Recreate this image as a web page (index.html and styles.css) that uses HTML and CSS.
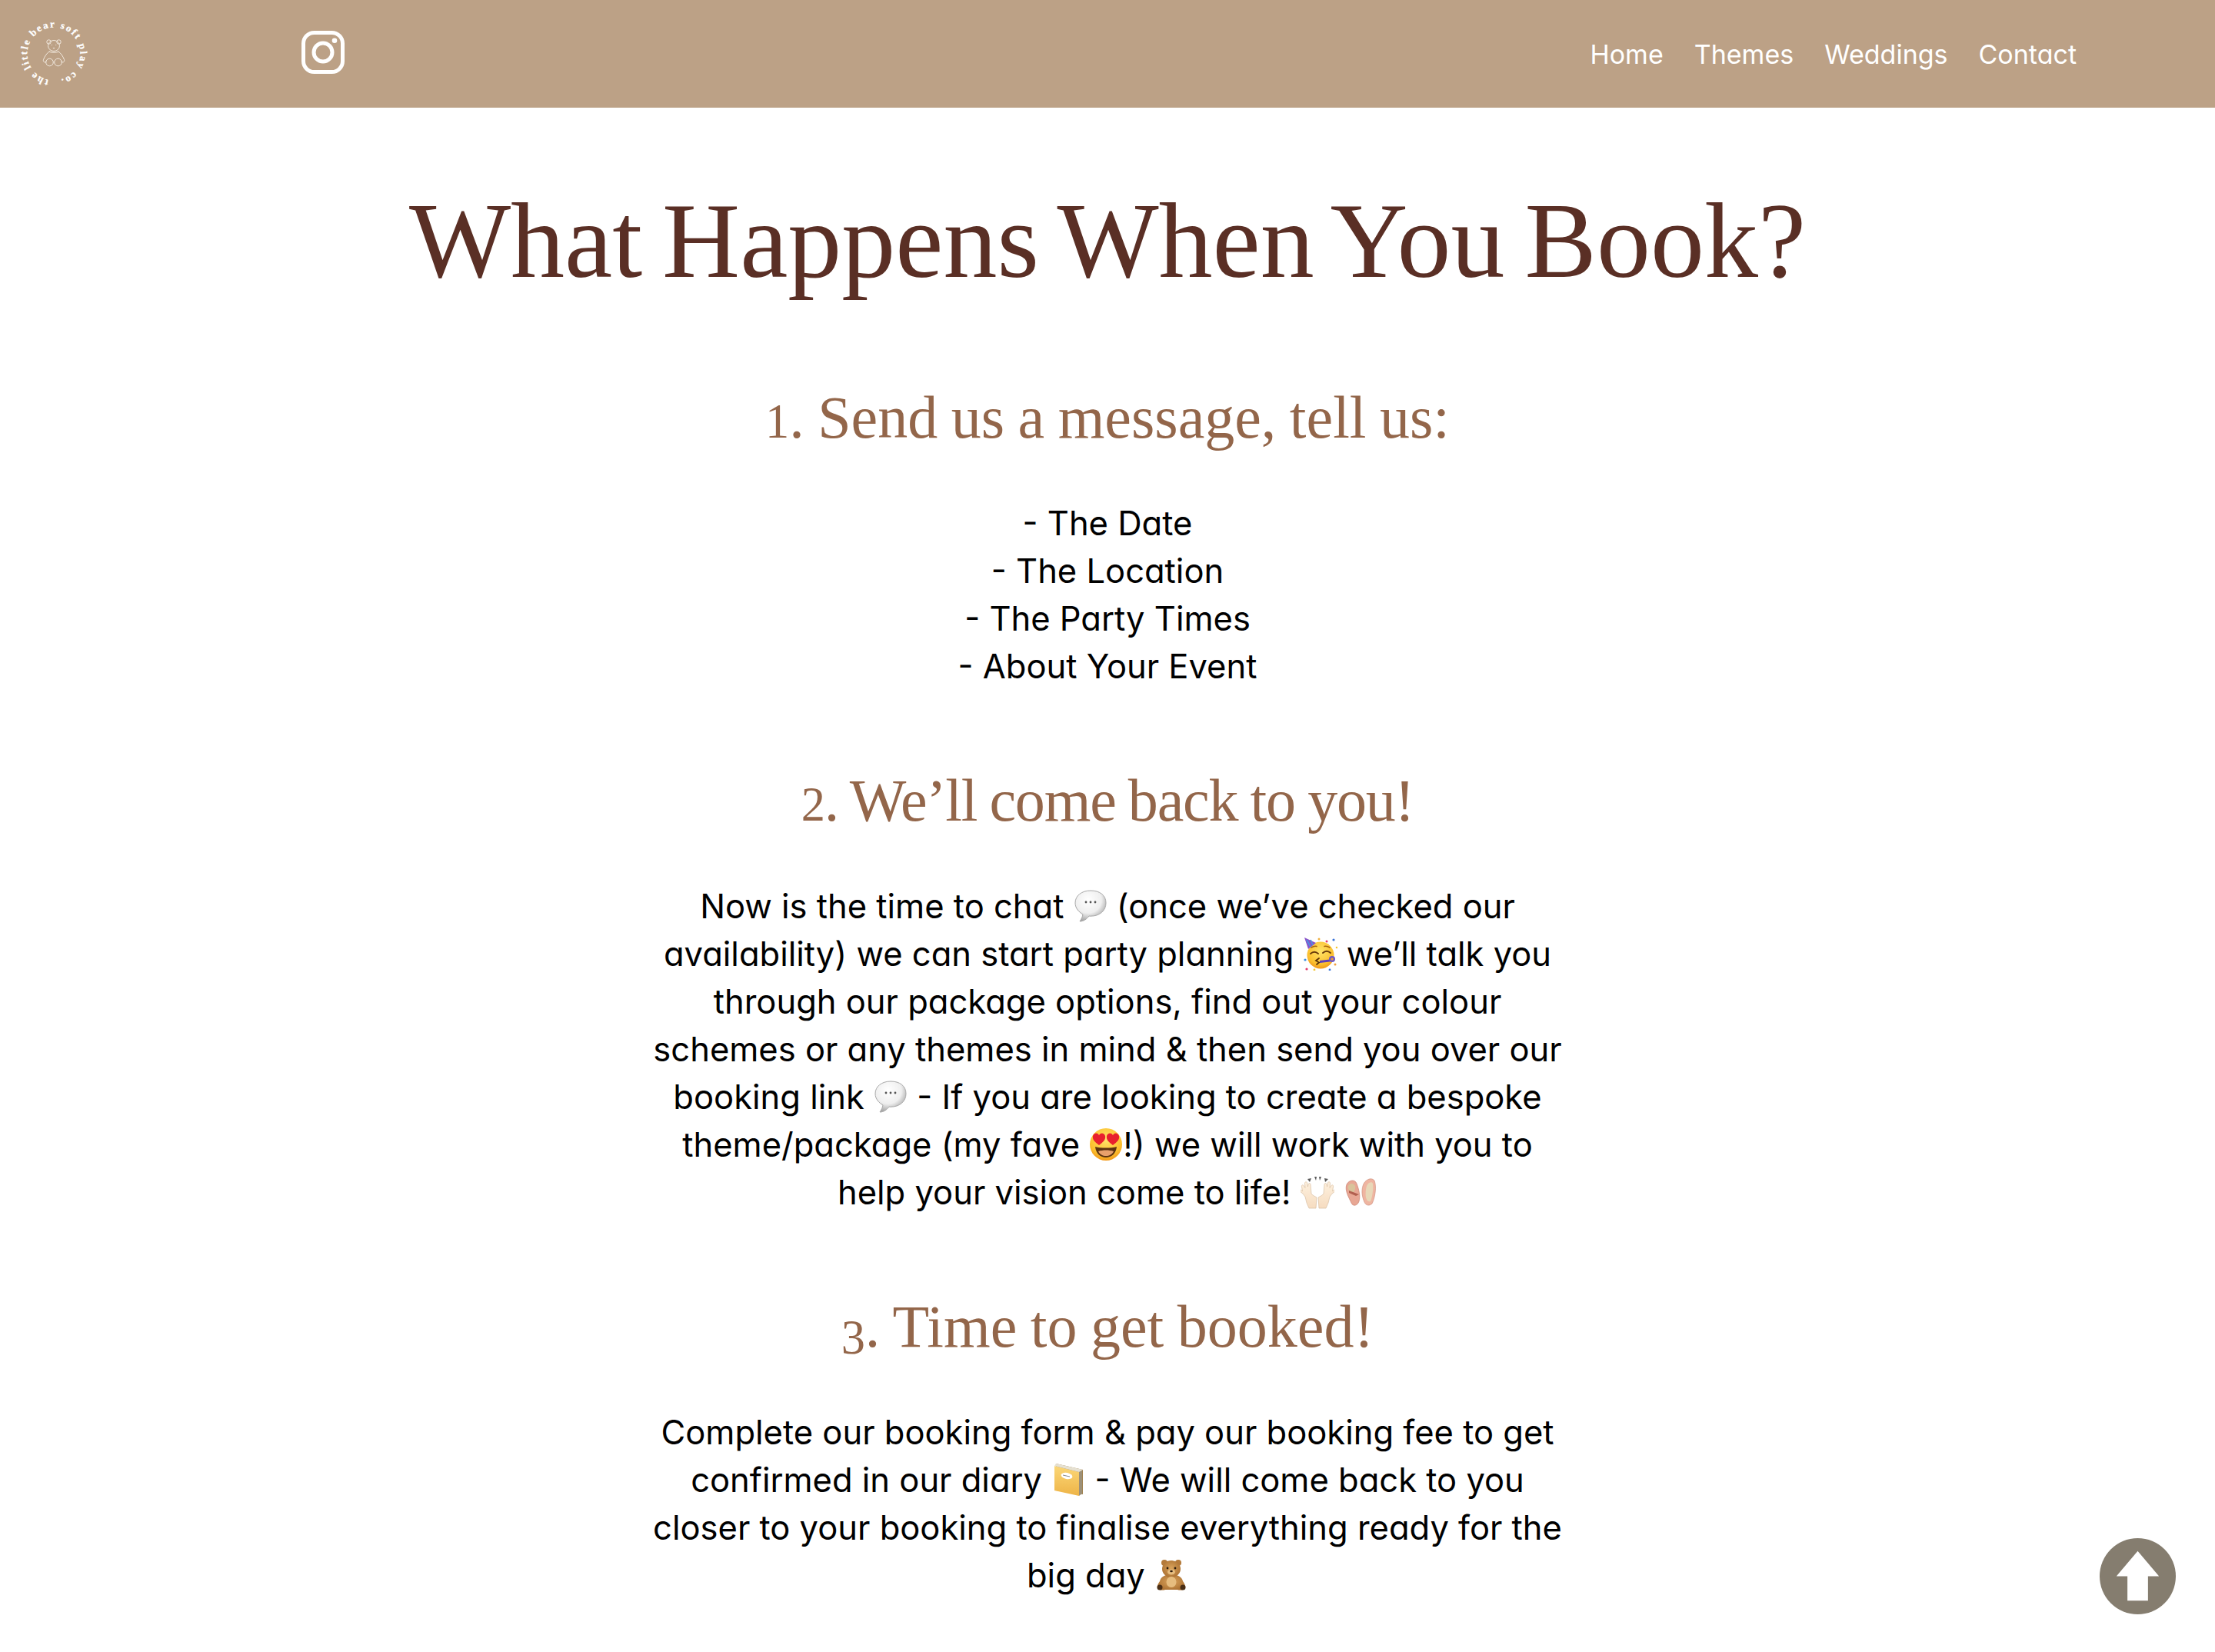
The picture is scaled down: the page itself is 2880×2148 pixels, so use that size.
FILE: index.html
```html
<!DOCTYPE html>
<html lang="en">
<head>
<meta charset="utf-8">
<title>What Happens When You Book?</title>
<link rel="stylesheet" href="styles.css">
</head>
<body>
<svg class="defs" width="0" height="0" aria-hidden="true">
  <defs>
    <radialGradient id="gBubble" cx="42%" cy="30%" r="72%"><stop offset="0" stop-color="#fff"/><stop offset=".6" stop-color="#efefef"/><stop offset="1" stop-color="#9d9d9d"/></radialGradient>
    <radialGradient id="gFace" cx="50%" cy="35%" r="70%"><stop offset="0" stop-color="#ffe46a"/><stop offset=".7" stop-color="#fbbf2d"/><stop offset="1" stop-color="#ee8a12"/></radialGradient>
    <linearGradient id="gBook" x1="0" y1="0" x2="0" y2="1"><stop offset="0" stop-color="#fbd777"/><stop offset="1" stop-color="#eeb447"/></linearGradient>
    <radialGradient id="gBear" cx="50%" cy="45%" r="65%"><stop offset="0" stop-color="#d9a35c"/><stop offset="1" stop-color="#a56a2c"/></radialGradient>
    <linearGradient id="gHand" x1="0" y1="0" x2="0" y2="1"><stop offset="0" stop-color="#fdf0de"/><stop offset="1" stop-color="#f6dcc0"/></linearGradient>
    <symbol id="e-bubble" viewBox="0 0 44 44">
      <path d="M22 2C10 2 2 9 2 18c0 7 5 12 10 15-.5 3-2 6-4 9 5 0 9-3 12-7 1 .2 1.300.2 2 .2 12 0 20-7.200 20-17.200S34 2 22 2z" fill="url(#gBubble)" stroke="#a8a8a8" stroke-width="1"/>
      <circle cx="16" cy="17" r="1.400" fill="#555"/><circle cx="22" cy="17" r="1.400" fill="#555"/><circle cx="28" cy="17" r="1.400" fill="#555"/>
    </symbol>
    <symbol id="e-party" viewBox="0 0 44 44">
      <circle cx="22" cy="24" r="17.500" fill="url(#gFace)"/>
      <path d="M1 1 16 8 6 16z" fill="#8a52c8"/><path d="M4 4l5 9M9 4l3 7" stroke="#4d8fe0" stroke-width="1.800"/>
      <g>
        <circle cx="20" cy="3" r="1.500" fill="#f0b040"/><circle cx="30" cy="6" r="1.500" fill="#e23b6d"/><circle cx="39" cy="4" r="1.600" fill="#3a74d8"/>
        <circle cx="43" cy="14" r="1.300" fill="#f4c430"/><circle cx="2" cy="30" r="1.600" fill="#3a8ee0"/><circle cx="4" cy="42" r="1.600" fill="#e23b6d"/>
        <circle cx="14" cy="43" r="1.400" fill="#f4c430"/><circle cx="34" cy="43" r="1.400" fill="#3a74d8"/><circle cx="41" cy="36" r="1.500" fill="#f0a040"/>
      </g>
      <path d="M9 22q5-4.500 10 0M25 21q5-4.500 10 0" fill="none" stroke="#6a3c0c" stroke-width="1.900" stroke-linecap="round"/>
      <path d="M10 14q4-2.500 7-1.500M27 12.500q3-1 7 1.500" fill="none" stroke="#a8640e" stroke-width="1.500" stroke-linecap="round"/>
      <path d="M20 28l-4 3 4 2.500-3 2.500" fill="none" stroke="#5a3208" stroke-width="1.800" stroke-linecap="round"/>
      <path d="M21 31l13-1.500v3L21 34z" fill="#5d3fb8"/><circle cx="37" cy="29" r="4" fill="#6b56c8"/><circle cx="37" cy="29" r="1.800" fill="#e59a3c"/>
    </symbol>
    <symbol id="e-hearts" viewBox="0 0 44 44">
      <circle cx="22" cy="22" r="21" fill="url(#gFace)"/>
      <path d="M8 25c7 2 21 2 28 0-1 9-7 14-14 14S9 34 8 25z" fill="#5c3310"/>
      <path d="M12 31c6-2 14-2 20 0-2 4-6 6-10 6s-8-2-10-6z" fill="#e8a06b"/>
      <path d="M13 23C8 19 4 16 5 11c1-4 6-5 8-1 2-4 7-3 8 1 1 5-3 8-8 12z" fill="#e8202e"/>
      <path d="M31 23c-5-4-9-7-8-12 1-4 6-5 8-1 2-4 7-3 8 1 1 5-3 8-8 12z" fill="#e8202e"/>
    </symbol>
    <symbol id="e-hands" viewBox="0 0 44 44">
      <g fill="#5a5a5a">
        <path d="M9 5l5-1-2 5zM18 2l3 0-1 5zM24 2l3 0-2 5zM31 4l5 1-4 4z"/>
      </g>
      <g fill="url(#gHand)" stroke="#d8bfa2" stroke-width=".7">
        <path d="M2 24l3 4 2 8 3 7h9l1-14c-3-2-6-3-7-5l-1-12c-.2-2-2.500-2-3 0l-.5 3-1-5c-.4-2-3-1.500-3 .5l.5 6-2-3c-1-1.500-3-.5-2.500 1.500l1 6-2-2c-1.200-1-2.500 0-2 1.500z" transform="translate(1 0)"/>
        <path d="M42 24l-3 4-2 8-3 7h-9l-1-14c3-2 6-3 7-5l1-12c.2-2 2.500-2 3 0l.5 3 1-5c.4-2 3-1.500 3 .5l-.5 6 2-3c1-1.500 3-.5 2.500 1.500l-1 6 2-2c1.200-1 2.500 0 2 1.500z" transform="translate(-1 0)"/>
      </g>
    </symbol>
    <symbol id="e-shoes" viewBox="0 0 44 44">
      <path d="M4 12c3-6 11-7 13-1 3 8 5 16 3 23-2 6-8 7-10 2C7 29 1 20 4 12z" fill="#e8a794" stroke="#c8806e" stroke-width=".7"/>
      <path d="M6 14c2-4 7-4 9 0 1 5-2 10-5 8-3-1-5-5-4-8z" fill="#d9c39b"/>
      <path d="M7 20l13 5-4 2-9-4z" fill="#b2604f"/>
      <path d="M25 14c2-8 11-12 15-7 3 8 1 22-3 30-3 3-8 3-10-2-3-7-4-14-2-21z" fill="#efb5a1" stroke="#cf9180" stroke-width=".7"/>
      <path d="M30 14c2-5 7-6 8-3 1 8-1 18-3 23-3 1-5-1-6-5-1-5 0-11 1-15z" fill="#e8d8b8"/>
    </symbol>
    <symbol id="e-book" viewBox="0 0 44 44">
      <path d="M6 1l35 8v32L6 36z" fill="#a08352"/>
      <path d="M4 4l32 8v31L4 36z" fill="url(#gBook)"/>
      <path d="M36 12l4-3v31l-4 3z" fill="#9c9078"/>
      <path d="M6 1l35 8-5 3L4 4z" fill="#e6e1d2"/>
      <ellipse cx="20" cy="17" rx="7.500" ry="4" transform="rotate(12 20 17)" fill="#fff"/>
      <path d="M15 16l9 2" stroke="#888" stroke-width="1"/>
    </symbol>
    <symbol id="e-bear" viewBox="0 0 44 44">
      <path d="M7 30c1-6 8-9 15-9s14 3 15 9c2 3 4 6 3 9-2 3-7 3-10 2H14c-3 1-8 1-10-2-1-3 1-6 3-9z" fill="url(#gBear)"/>
      <circle cx="13" cy="6" r="4" fill="#b47a3a"/><circle cx="31" cy="6" r="4" fill="#b47a3a"/>
      <ellipse cx="22" cy="14" rx="12" ry="11" fill="url(#gBear)"/>
      <ellipse cx="22" cy="31" rx="6.500" ry="7" fill="#e6bd7f"/>
      <ellipse cx="22" cy="18" rx="5" ry="3.500" fill="#e6bd7f"/>
      <circle cx="17" cy="13" r="1.400" fill="#2a1a0c"/><circle cx="27" cy="13" r="1.400" fill="#2a1a0c"/>
      <ellipse cx="22" cy="17" rx="1.800" ry="1.200" fill="#2a1a0c"/>
      <circle cx="7" cy="38" r="3.500" fill="#4a2f16"/><circle cx="37" cy="38" r="3.500" fill="#4a2f16"/>
    </symbol>
  </defs>
</svg>

<header class="topbar">
  <div class="brand">
    <a class="logo" href="#" aria-label="The little bear soft play co.">
      <svg class="logo-svg" viewBox="0 0 100 100">
        <defs><path id="ring" d="M43.400 83.900A34.500 34.500 0 1 1 57.800 83.600"/></defs>
        <text class="logo-text"><textPath href="#ring" textLength="200" lengthAdjust="spacing">the little bear soft play co.</textPath></text>
        <g class="logo-bear">
          <circle cx="43.500" cy="34.500" r="2.700"/><circle cx="56.500" cy="34.500" r="2.700"/>
          <ellipse cx="50" cy="39.500" rx="7.500" ry="7"/>
          <path d="M45 46.500c-4 2-7 7-8.500 11-1 3 2 4.500 4 2.500M55 46.500c4 2 7 7 8.500 11 1 3-2 4.500-4 2.500"/>
          <path d="M44.500 47.500c3 1 8 1 11 0"/>
          <circle cx="44.500" cy="61" r="4.800"/><circle cx="55.500" cy="61" r="4.800"/>
          <circle class="logo-eye" cx="47.300" cy="38.500" r=".6"/><circle class="logo-eye" cx="52.700" cy="38.500" r=".6"/>
          <path class="logo-eye" d="M48.500 42h3l-1.500 1.500z"/>
        </g>
      </svg>
    </a>
    <a class="insta" href="#" aria-label="Instagram">
      <svg viewBox="0 0 56 56" class="insta-svg">
        <rect x="2.500" y="2.500" width="51" height="51" rx="14"/>
        <circle cx="28" cy="28" r="12"/>
        <circle class="insta-dot" cx="43" cy="12.700" r="3.300"/>
      </svg>
    </a>
  </div>
  <nav class="nav">
    <a href="#">Home</a>
    <a href="#">Themes</a>
    <a href="#">Weddings</a>
    <a href="#">Contact</a>
  </nav>
</header>

<main class="content">
  <h1 class="title">What Happens When You Book?</h1>

  <section class="step">
    <h2 class="step-title"><span class="num">1</span>. Send us a message, tell us:</h2>
    <p class="step-text">- The Date<br>- The Location<br>- The Party Times<br>- About Your Event</p>
  </section>

  <section class="step">
    <h2 class="step-title step-title-tight"><span class="num">2</span>. We’ll come back to you!</h2>
    <p class="step-text">Now is the time to chat <svg class="emoji"><use href="#e-bubble"/></svg> (once we’ve checked our<br>availability) we can start party planning <svg class="emoji"><use href="#e-party"/></svg> we’ll talk you<br>through our package options, find out your colour<br>schemes or any themes in mind &amp; then send you over our<br>booking link <svg class="emoji"><use href="#e-bubble"/></svg> - If you are looking to create a bespoke<br>theme/package (my fave <svg class="emoji"><use href="#e-hearts"/></svg>!) we will work with you to<br>help your vision come to life! <svg class="emoji"><use href="#e-hands"/></svg> <svg class="emoji"><use href="#e-shoes"/></svg></p>
  </section>

  <section class="step">
    <h2 class="step-title"><span class="num num-low">3</span>. Time to get booked!</h2>
    <p class="step-text">Complete our booking form &amp; pay our booking fee to get<br>confirmed in our diary <svg class="emoji"><use href="#e-book"/></svg> - We will come back to you<br>closer to your booking to finalise everything ready for the<br>big day <svg class="emoji"><use href="#e-bear"/></svg></p>
  </section>
</main>

<a class="to-top" href="#" aria-label="Back to top">
  <svg viewBox="0 0 100 100" class="to-top-svg">
    <circle cx="50" cy="50" r="50"/>
    <path d="M50 17 78 50H63.500V82H36.500V50H22z"/>
  </svg>
</a>
</body>
</html>
```
FILE: styles.css
```css
* { box-sizing: border-box; }
html, body { margin: 0; padding: 0; }
body {
  height: 2148px;
  overflow: hidden;
  background: #fff;
  color: #000;
  font-family: "Inter", "Liberation Sans", sans-serif;
  font-feature-settings: "cv11" 1;
}
a { color: inherit; text-decoration: none; }
.defs { position: absolute; }

.topbar {
  height: 140px;
  background: #bca186;
  display: flex;
  align-items: center;
  justify-content: space-between;
  padding: 0 180px 0 20px;
}
.brand { display: flex; align-items: center; gap: 272px; }
.logo { display: block; width: 100px; height: 100px; }
.logo-svg { display: block; width: 100px; height: 100px; }
.logo-text {
  font-family: "Liberation Serif", serif;
  font-weight: 700;
  font-size: 13px;
  fill: #fff;
  stroke: #fff;
  stroke-width: .25;
}
.logo-bear { fill: none; stroke: #f6efe6; stroke-width: .9; }
.logo-eye { fill: #f6efe6; stroke: none; }
.insta { display: block; width: 56px; height: 56px; margin-top: -4px; }
.insta-svg { display: block; width: 56px; height: 56px; fill: none; stroke: #fff; stroke-width: 5; }
.insta-dot { fill: #fff; stroke: none; }

.nav { display: flex; gap: 40px; color: #fff; font-size: 34px; font-weight: 400; }

.content { text-align: center; }
.title {
  margin: 0 0 11px;
  padding-top: 98px;
  font-family: "Liberation Serif", serif;
  font-weight: 400;
  font-size: 140px;
  line-height: 150px;
  word-spacing: -9px;
  color: #5a2f25;
}
.step { padding-top: 99px; }
.step-title {
  margin: 0 0 56px;
  font-family: "Liberation Serif", serif;
  font-weight: 400;
  font-size: 78px;
  line-height: 90px;
  word-spacing: -2px;
  color: #93664a;
}
.step-title-tight { letter-spacing: -1.2px; }
.num { font-size: .8em; }
.num-low { position: relative; top: .14em; }
.step-text {
  margin: 0;
  font-size: 43.500px;
  line-height: 62px;
  font-weight: 400;
}
.emoji { width: 44px; height: 44px; vertical-align: -6px; }

.to-top { position: fixed; right: 51px; bottom: 49px; width: 99px; height: 99px; }
.to-top-svg { display: block; width: 99px; height: 99px; fill: #fff; }
.to-top-svg circle { fill: #857d6f; }
```
